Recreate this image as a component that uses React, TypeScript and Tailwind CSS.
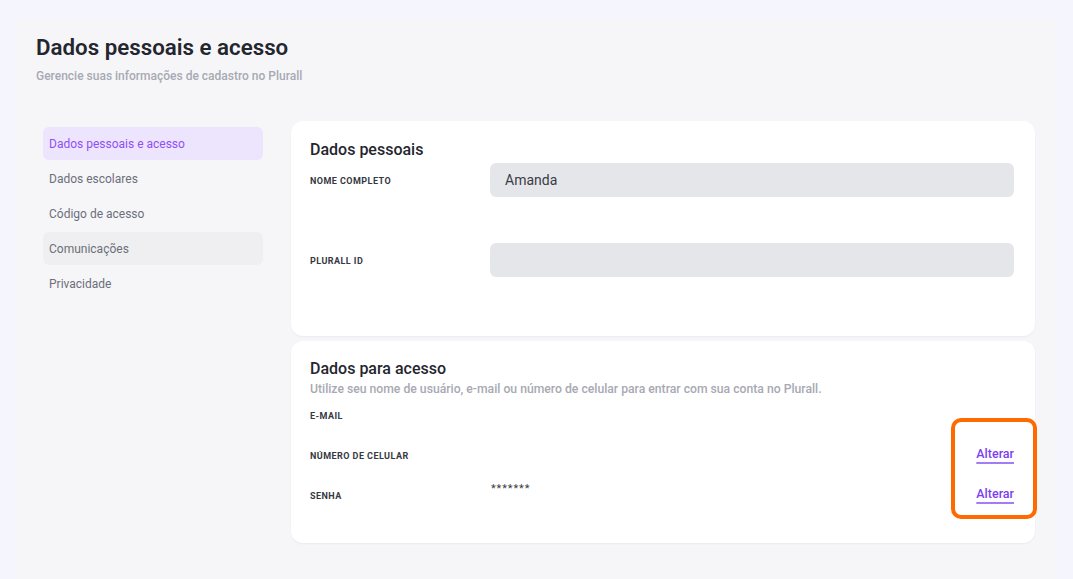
import React from "react";

const MENU = [
  { label: "Dados pessoais e acesso", active: true },
  { label: "Dados escolares" },
  { label: "Código de acesso" },
  { label: "Comunicações", hover: true },
  { label: "Privacidade" },
];

function Label({ children }: { children: React.ReactNode }) {
  return (
    <span className="text-[9px] font-bold uppercase tracking-[0.05em] text-[#363842]">
      {children}
    </span>
  );
}

function Alterar() {
  return (
    <a
      href="#"
      className="text-[12.5px] font-medium leading-[16px] text-[#7b3ff2] underline decoration-[#a57cf8] decoration-[1.5px] underline-offset-[4px]"
    >
      Alterar
    </a>
  );
}

export default function App() {
  return (
    <div
      className="relative h-[579px] w-[1073px] overflow-hidden bg-[#f5f5fd] px-4 pt-5"
      style={{ fontFamily: "Roboto, 'Noto Sans', sans-serif" }}
    >
      <div className="h-full bg-[#f6f6f9] pl-5 pr-[22px] pt-[12px]">
        {/* Cabeçalho */}
        <h1 className="text-[22.3px] font-semibold leading-[30px] text-[#24262e]">
          Dados pessoais e acesso
        </h1>
        <p className="mt-[6px] text-[12px] font-medium leading-[16px] text-[#a7a9b3]">
          Gerencie suas informações de cadastro no Plurall
        </p>

        <div className="mt-[37px] flex gap-[28px]">
          {/* Menu lateral */}
          <nav className="ml-[7px] mt-[6px] flex w-[220px] shrink-0 flex-col gap-[2px]">
            {MENU.map((item) => (
              <div
                key={item.label}
                className={`flex h-[33px] items-center rounded-md px-[6px] text-[12px] ${
                  item.active
                    ? "bg-[#ede4fe] text-[#9150f5]"
                    : item.hover
                    ? "bg-[#efeff2] text-[#6c6f79]"
                    : "text-[#6c6f79]"
                }`}
              >
                {item.label}
              </div>
            ))}
          </nav>

          <div className="flex flex-1 flex-col gap-[5px]">
            {/* Dados pessoais */}
            <section className="h-[215px] rounded-xl bg-white pl-[19px] pr-[21px] pt-[19px] shadow-[0_1px_2px_rgba(20,20,60,0.05)]">
              <h2 className="text-[16px] font-medium leading-[20px] text-[#24262e]">Dados pessoais</h2>
              <div className="mt-[3px] flex flex-col gap-[46px]">
                <div className="flex items-center">
                  <div className="w-[180px] pb-[2px]">
                    <Label>Nome completo</Label>
                  </div>
                  <div className="flex h-[34px] flex-1 items-center rounded-md bg-[#e5e6ea] px-[15px] text-[14px] text-[#3a3c45]">
                    Amanda
                  </div>
                </div>
                <div className="flex items-center">
                  <div className="w-[180px] pb-[2px]">
                    <Label>Plurall ID</Label>
                  </div>
                  <div className="h-[34px] flex-1 rounded-md bg-[#e5e6ea]" />
                </div>
              </div>
            </section>

            {/* Dados para acesso */}
            <section className="h-[202px] rounded-xl bg-white pl-[19px] pr-[21px] pt-[18px] shadow-[0_1px_2px_rgba(20,20,60,0.05)]">
              <h2 className="text-[16px] font-medium leading-[20px] text-[#24262e]">Dados para acesso</h2>
              <p className="mt-[2px] text-[12.2px] font-medium leading-[16px] text-[#a7a9b3]">
                Utilize seu nome de usuário, e-mail ou número de celular para entrar com sua conta no Plurall.
              </p>
              <div className="mt-[5px] flex flex-col gap-4">
                <div className="flex h-6 items-center">
                  <div className="w-[180px]">
                    <Label>E-mail</Label>
                  </div>
                </div>
                <div className="flex h-6 items-center">
                  <div className="w-[180px]">
                    <Label>Número de celular</Label>
                  </div>
                  <div className="flex-1" />
                  <Alterar />
                </div>
                <div className="flex h-6 items-center">
                  <div className="w-[181px]">
                    <Label>Senha</Label>
                  </div>
                  <div className="mb-[9px] flex-1 text-[11px] tracking-[0.08em] text-[#3a3c45]">*******</div>
                  <Alterar />
                </div>
              </div>
            </section>
          </div>
        </div>
      </div>

      {/* Destaque */}
      <div className="pointer-events-none absolute left-[951px] top-[418px] h-[101px] w-[86px] rounded-[10px] border-4 border-[#ff6a00]" />
    </div>
  );
}
